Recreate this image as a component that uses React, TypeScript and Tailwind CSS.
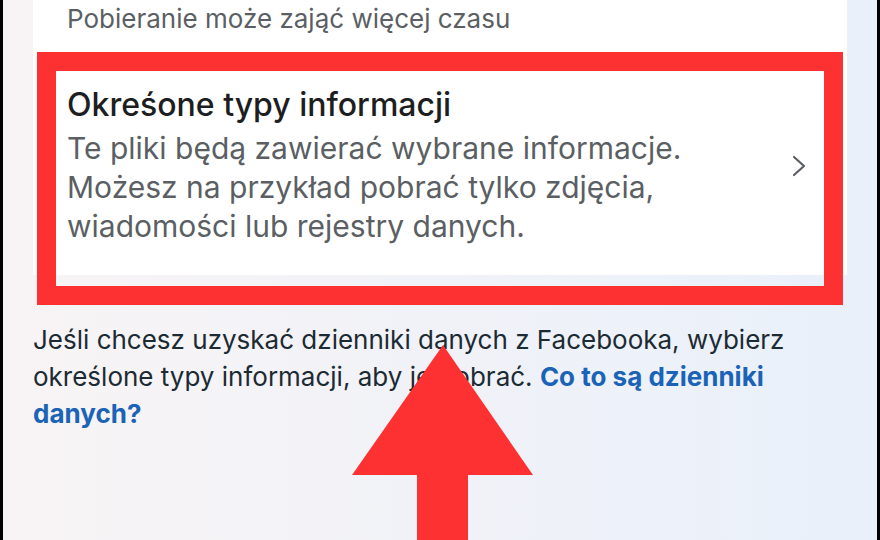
import { ReactNode } from 'react';

function ChevronIcon() {
  return (
    <svg width="16" height="24" viewBox="0 0 16 24" fill="none" className="shrink-0">
      <polyline
        points="3,3 13,12 3,21"
        stroke="#5b5f64"
        strokeWidth="2.2"
        strokeLinecap="round"
        strokeLinejoin="round"
      />
    </svg>
  );
}

function UpArrow() {
  return (
    <svg
      width="200"
      height="200"
      viewBox="0 0 200 200"
      className="pointer-events-none absolute left-[340px] top-[340px]"
    >
      <polygon points="100,5 9,135 74,135 74,200 125,200 125,135 190,135" fill="#fd3131" />
    </svg>
  );
}

function Row({ children }: { children: ReactNode }) {
  return <div className="flex items-center justify-between pl-[34px] pr-[40px]">{children}</div>;
}

export default function App() {
  return (
    <div
      className="relative h-[540px] w-[880px] overflow-hidden border-x-[3px] border-black bg-gradient-to-r from-[#f8f4f5] to-[#e9f0fa] px-[30px]"
      style={{ fontFamily: 'Inter, "Noto Sans", sans-serif' }}
    >
      <div className="bg-white">
        <div className="h-[52px] pl-[34px] pt-[1px]">
          <p className="text-[26px] leading-[36px] text-[#5b5f64]">Pobieranie może zająć więcej czasu</p>
        </div>
        <div className="h-[223px] pt-[33px]">
          <Row>
            <div className="flex flex-col">
              <h2 className="text-[32px] font-medium leading-[40px] text-[#1c1e21]">
                Okreśone typy informacji
              </h2>
              <p className="mt-[4px] text-[30px] leading-[39px] text-[#5b5f64]">
                Te pliki będą zawierać wybrane informacje.
                <br />
                Możesz na przykład pobrać tylko zdjęcia,
                <br />
                wiadomości lub rejestry danych.
              </p>
            </div>
            <ChevronIcon />
          </Row>
        </div>
      </div>

      <p className="mt-[46px] max-w-[800px] text-[26px] leading-[37px] text-[#1c2b33]">
        Jeśli chcesz uzyskać dzienniki danych z Facebooka, wybierz
        <br />
        określone typy informacji, aby je pobrać.{' '}
        <span className="font-bold text-[#1b63b7]">
          Co to są dzienniki
          <br />
          danych?
        </span>
      </p>

      <div className="pointer-events-none absolute left-[34px] top-[52px] h-[253px] w-[806px] border-[19px] border-[#fd3131]" />
      <UpArrow />
    </div>
  );
}
